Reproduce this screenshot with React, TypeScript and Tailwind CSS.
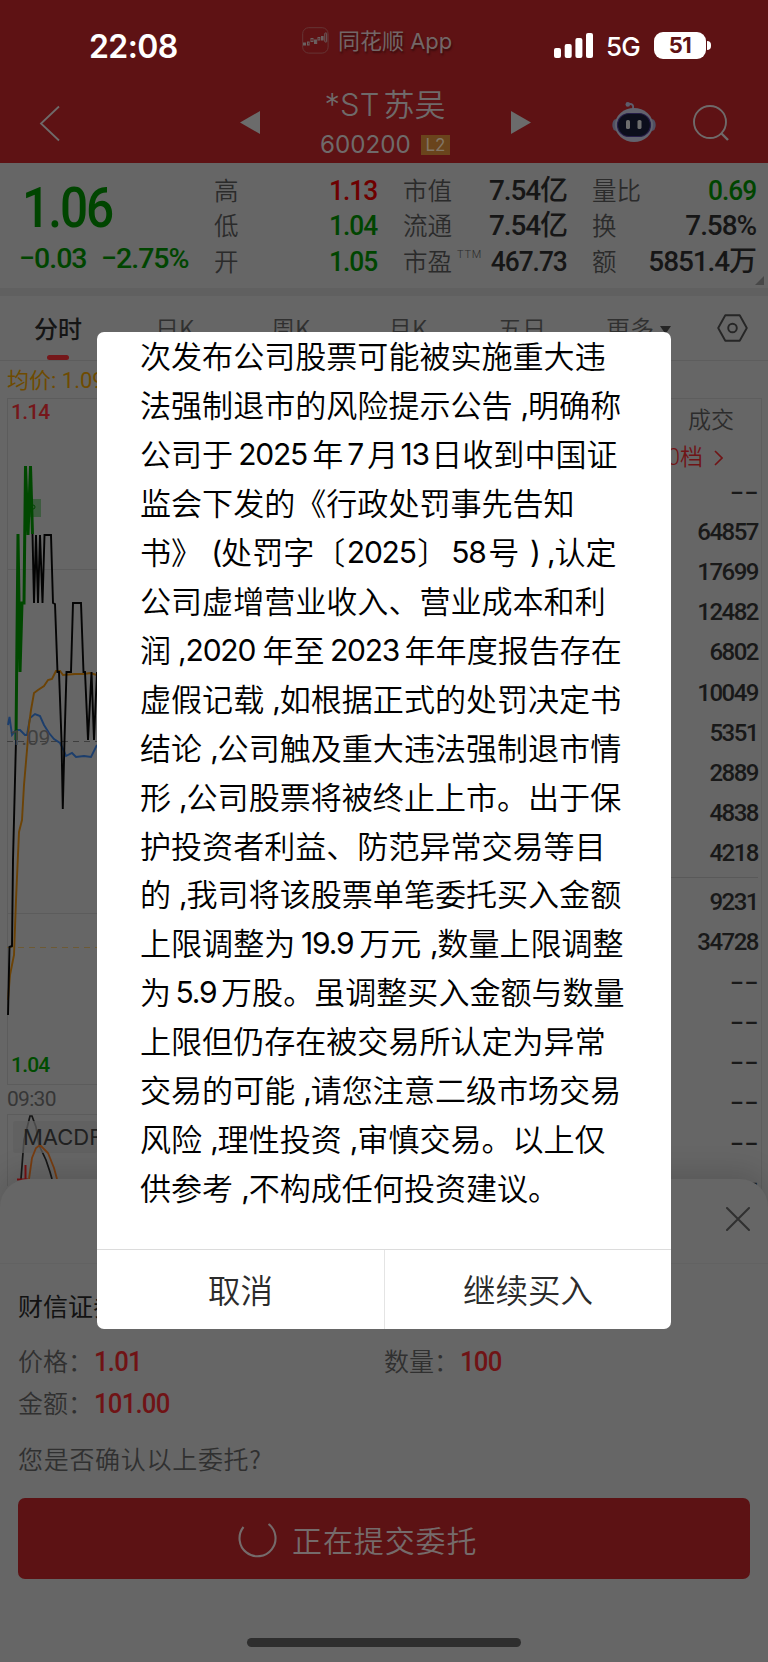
type Run = string | [text: string, width: number];

/* plain strings are full-width glyphs, tuples are latin runs with their own advance */
const NOTICE: Run[][] = [
  ["次发布公司股票可能被实施重大违"],
  ["法强制退市的风险提示公告", [" ,", 15.5], "明确称"],
  ["公司于", ["2025", 79], "年", ["7", 24], "月", ["13", 33], "日收到中国证"],
  ["监会下发的《行政处罚事先告知"],
  ["书》", [" (", 19], "处罚字〔", ["2025", 72], "〕", ["58", 40], "号", [" ) ,", 35], "认定"],
  ["公司虚增营业收入、营业成本和利"],
  ["润", [" ,", 14.5], ["2020 ", 76.9], "年至", ["2023", 80], "年年度报告存在"],
  ["虚假记载", [" ,", 15.5], "如根据正式的处罚决定书"],
  ["结论", [" ,", 15.5], "公司触及重大违法强制退市情"],
  ["形", [" ,", 15.5], "公司股票将被终止上市。出于保"],
  ["护投资者利益、防范异常交易等目"],
  ["的", [" ,", 15.5], "我司将该股票单笔委托买入金额"],
  ["上限调整为", ["19.9", 64], "万元", [" ,", 16], "数量上限调整"],
  ["为", ["5.9", 50], "万股。虽调整买入金额与数量"],
  ["上限但仍存在被交易所认定为异常"],
  ["交易的可能", [" ,", 15.5], "请您注意二级市场交易"],
  ["风险", [" ,", 15.5], "理性投资", [" ,", 15.5], "审慎交易。以上仅"],
  ["供参考", [" ,", 15.5], "不构成任何投资建议。"],
];

const GREEN = "text-[#004500]";
const RED = "text-[#6e0000]";
const INK = "text-[#161616]";

const QUOTES = [
  { width: "w-[163px]", rows: [["高", "1.13", RED], ["低", "1.04", GREEN], ["开", "1.05", GREEN]] },
  { width: "w-[164px]", rows: [["市值", "7.54亿", INK], ["流通", "7.54亿", INK], ["市盈", "467.73", INK]] },
  { width: "w-[164px]", rows: [["量比", "0.69", GREEN], ["换", "7.58%", INK], ["额", "5851.4万", INK]] },
];

const SELLS = ["--", "64857", "17699", "12482", "6802", "10049", "5351", "2889", "4838", "4218"];
const BUYS = ["9231", "34728", "--", "--", "--", "--", "--", "--"];

const DIN = "font-['Roboto','Noto_Sans_CJK_SC',sans-serif] font-medium";

function StatusBar() {
  return (
    <div className="flex h-[86px] items-start font-['Inter',sans-serif] text-white">
      <div className="ml-[89px] mt-[27px] w-[213px] text-[32px] font-semibold leading-10 tracking-[-0.6px]">22:08</div>
      <svg className="mt-[27px] size-[27px]" viewBox="0 0 27 27" fill="none" stroke="#6b6060">
        <rect x="0.7" y="0.7" width="25.4" height="25.4" rx="6" stroke="#653535" />
        <rect x="1.5" y="16" width="2" height="2" fill="#6b6060" />
        <rect x="5.5" y="15" width="1.6" height="3" />
        <rect x="9" y="11.5" width="2" height="3" />
        <rect x="12.5" y="13" width="2.2" height="3.5" fill="#6b6060" />
        <rect x="16" y="10.5" width="1.8" height="2.5" />
        <rect x="19.5" y="9.5" width="1.6" height="3.5" fill="#6b6060" />
        <rect x="22.8" y="6" width="1.9" height="9" rx="0.5" />
      </svg>
      <div className="ml-[9px] mt-[25px] w-[216px] whitespace-nowrap font-['Inter','Noto_Sans_CJK_SC',sans-serif] text-[22px] leading-8 text-[#736767] [text-shadow:1px_2px_2px_rgba(0,0,0,0.4)]">
        同花顺 App
      </div>
      <svg className="mt-[33px] h-[25px] w-[39px]" viewBox="0 0 39 25" fill="#fff">
        <rect y="15" width="7" height="10" rx="2" />
        <rect x="10.7" y="11" width="7" height="14" rx="2" />
        <rect x="21.4" y="5" width="7" height="20" rx="2" />
        <rect x="32" width="7" height="25" rx="2" />
      </svg>
      <div className="ml-[13px] mt-[31px] w-[48px] text-[26px] font-medium leading-8 tracking-[-0.8px]">5G</div>
      <div className="mt-[32px] flex h-[27px] w-[52px] items-center justify-center rounded-[9px] bg-white text-[22px] font-bold tracking-[-0.5px] text-[#5e1214]">
        51
      </div>
      <div className="ml-px mt-[41px] h-[9px] w-1 rounded-r-full bg-white" />
    </div>
  );
}

function Robot() {
  return (
    <svg className="ml-[80px] h-[42px] w-[44px]" viewBox="0 0 44 42">
      <path d="M21 8C22 4 20 2.5 17 3" fill="none" stroke="#5d5d6c" strokeWidth="2" />
      <circle cx="15.8" cy="3.4" r="2.3" fill="#5d5d6c" />
      <ellipse cx="4" cy="24" rx="3.7" ry="6" fill="#505063" />
      <ellipse cx="40" cy="24" rx="3.7" ry="6" fill="#505063" />
      <ellipse cx="22" cy="24" rx="19" ry="17" fill="#62636e" />
      <rect x="5.5" y="12.5" width="33" height="23" rx="11.5" fill="#0c0e1c" stroke="#261d48" strokeWidth="1.2" />
      <rect x="14" y="19" width="4" height="9" rx="1.6" fill="#6e6e6e" />
      <rect x="25.5" y="19" width="4" height="9" rx="1.6" fill="#6e6e6e" />
    </svg>
  );
}

function TitleBar() {
  return (
    <div className="flex h-[77px] items-start text-[#6f6a6a]">
      <svg className="ml-[39px] mt-[19px] h-[37px] w-[21px]" viewBox="0 0 21 37" fill="none" stroke="currentColor" strokeWidth="1.8">
        <path d="M20 1.5 2 18.5 20 35.5" />
      </svg>
      <svg className="ml-[180px] mt-[25px] h-[23px] w-5" viewBox="0 0 20 23" fill="#6b6b6b">
        <path d="M20 0v23L0 11.5z" />
      </svg>
      <div className="ml-[49px] mt-px flex w-[152px] flex-col items-center whitespace-nowrap">
        <p className="font-['Inter','Noto_Sans_CJK_SC',sans-serif] text-[31px] font-[350] leading-[36px]">
          *ST<span className="ml-1">苏吴</span>
        </p>
        <p className="mt-[10px] flex items-center gap-2.5 text-[24.2px] leading-6 font-['Inter',sans-serif]">
          600200
          <span className="flex h-5 w-[29px] items-center justify-center bg-[#6a441c] text-[17px] text-[#827565]">L2</span>
        </p>
      </div>
      <svg className="ml-[50px] mt-[25px] h-[23px] w-5" viewBox="0 0 20 23" fill="#6b6b6b">
        <path d="M0 0v23l20-11.5z" />
      </svg>
      <div className="ml-[1px] mt-[15px]">
        <Robot />
      </div>
      <svg className="ml-[37px] mt-[19px] size-9" viewBox="0 0 36 36" fill="none" stroke="currentColor" strokeWidth="1.9">
        <circle cx="17" cy="17" r="16" />
        <path d="M28 28 35 35" strokeWidth="2.4" />
      </svg>
    </div>
  );
}

function QuotePanel() {
  return (
    <div className={`relative flex h-[126px] border-b border-[#606060] bg-[#666] ${DIN}`}>
      <div className={`w-[214px] ${GREEN}`}>
        <div className="ml-[22px] w-[120px] origin-left scale-x-[0.9] pt-[16px] text-[55px] leading-[58px] tracking-[-2.2px]">1.06</div>
        <div className="flex gap-[15px] pl-[19px] pt-[4px] text-[28.5px] leading-[36px] tracking-[-1px]">
          <span className="w-[67px]">−0.03</span>
          <span>−2.75%</span>
        </div>
      </div>
      {QUOTES.map((col, i) => (
        <div key={i} className={`${col.width} ${i === 0 ? "mr-[26px]" : i === 1 ? "mr-[25px]" : ""} pt-[10px]`}>
          {col.rows.map(([label, value, color]) => (
            <div key={label} className="flex h-[35.5px] items-center justify-between whitespace-nowrap">
              <span className="pt-[3px] text-[24.5px] font-[350] text-[#2b2b2b]">
                {label}
                {label === "市盈" && <sup className="ml-[5px] text-[11px] tracking-[0.8px] -top-[13px]">TTM</sup>}
              </span>
              <span className={`origin-right text-[28px] tracking-[-1.1px] ${/[亿万%]/.test(value) ? "" : "scale-x-[0.94]"} ${color}`}>{value}</span>
            </div>
          ))}
        </div>
      ))}
      <svg className="absolute bottom-[3px] right-[4px] size-[9px]" viewBox="0 0 9 9" fill="#484848">
        <path d="M9 0v9H0z" />
      </svg>
    </div>
  );
}

function Tabs() {
  return (
    <div className="flex h-[65px] items-start border-b border-[#5d5d5d] pt-[14px] font-['Noto_Sans_CJK_SC',sans-serif] text-[24px] font-[350] leading-9 text-[#303030]">
      <div className="ml-[34px] flex w-[121px] flex-col items-start font-medium text-[#151515]">
        分时
        <i className="ml-[13px] mt-[9px] h-[5px] w-[22px] rounded-full bg-[#75171a]" />
      </div>
      <span className="w-[116px]">日K</span>
      <span className="w-[117px]">周K</span>
      <span className="w-[110px]">月K</span>
      <span className="w-[108px]">五日</span>
      <span className="w-[54px]">更多</span>
      <svg className="mt-[16px] h-2 w-[11px]" viewBox="0 0 11 8" fill="#252525">
        <path d="M0 0h11L5.500 8z" />
      </svg>
      <svg className="ml-[46px] mt-[4px] h-[28px] w-[31px]" viewBox="0 0 31 28" fill="none" stroke="#262626" strokeWidth="1.9">
        <path d="M8.300 1.200h14.400L29.800 14l-7.100 12.800H8.300L1.200 14z" strokeLinejoin="round" />
        <circle cx="15.500" cy="14" r="4.300" />
      </svg>
    </div>
  );
}

function MinuteChart() {
  return (
    <svg className="h-[825px] w-[97px] shrink-0" viewBox="0 361 97 825" fill="none" fontFamily="Roboto, 'Noto Sans CJK SC', sans-serif">
      <path d="M7 398.500H97M7 569.500H97M7 913.500H97M7 1084.500H97M7 1114.500H97M7.500 398V1084M7.500 1114V1186" stroke="#5c5c5c" />
      <path d="M7 741.500H97" stroke="#3e3e3e" strokeDasharray="6 5" />
      <path d="M7 947.500H97" stroke="#6d5a34" strokeDasharray="6 5" />
      <text x="7" y="388" fontSize="22" fill="#6f4b00">均价: 1.093</text>
      <text x="11" y="418.500" fontSize="21" fontWeight="500" letterSpacing="-0.8" fill="#75171a">1.14</text>
      <rect x="24" y="499" width="17" height="18" fill="#3d5c3f" />
      <path d="M8 725 9.500 717 12 735 16 730 20 730 25 735 27 735 30 718 35 714 40 716 44 725 49 733 54 739 60 743 64 751 66 756 72 753 76 757 84 756 91 757 97 745" stroke="#1c3e6c" strokeWidth="1.900" />
      <path d="M8 1000 10 975 14 955 16 900 19 832 22 820 24 785 27 750 29 725 31 710 34 693 38 690 44 686 48 680 52 679 56 671 60 671 63 675 75 674 84 674 90 673 97 675" stroke="#6c4306" strokeWidth="1.900" />
      <path d="M8 1015 9.500 947 12 946 13 860 16 740M32.500 534 34 603 36 535 38 603 40 535 42.500 603 44.500 535H51L53 603 55 604 57.500 672H59L61.500 740 62.800 809 64.500 740 66.500 672H71L73 603H81L83.500 672H85L88 740 91.500 672 94 740 97 672" stroke="#040404" strokeWidth="1.900" />
      <path d="M16 740 18 534 20 672 22 603H24L25.500 466 28 535 30.500 466 32.500 534" stroke="#004800" strokeWidth="3" />
      <circle cx="33" cy="507" r="2" stroke="#004800" />
      <text x="10" y="744.500" fontSize="21" letterSpacing="-0.2" fill="#404040">1.09</text>
      <text x="11" y="1071.500" fontSize="21" fontWeight="500" letterSpacing="-0.8" fill="#004c00">1.04</text>
      <text x="7" y="1105.500" fontSize="21" letterSpacing="-0.7" fill="#363636">09:30</text>
      <path d="M21 1179 24 1140 28 1124 30 1116H32L36 1127 39 1145 46 1160 50 1172 52 1179" stroke="#161616" strokeWidth="1.700" />
      <rect x="13" y="1121" width="84" height="32" rx="3" fill="#5f5f5f" fillOpacity="0.7" />
      <path d="M29 1179 32 1158 36 1148 40 1145 48 1153 54 1168 57 1179" stroke="#773c10" strokeWidth="1.800" />
      <path d="M25.500 1165V1179M17 1179.500H28" stroke="#790e10" strokeWidth="2" />
      <text x="23" y="1145" fontSize="22" fontFamily="Inter, sans-serif" fill="#202020">MACDFS</text>
    </svg>
  );
}

function OrderBook() {
  return (
    <div className={`mr-[6px] mt-[37px] w-[92px] border-r border-t border-[#5d5d5d] pr-[3px] text-right text-[24px] tracking-[-1.5px] text-[#191919] ${DIN}`}>
      <div className="flex h-[45px] items-center justify-end pr-[24px] text-[23px] font-[350] tracking-normal text-[#2c2c2c]">成交</div>
      <div className="flex h-[28px] items-center justify-end whitespace-nowrap pr-[35px] text-[23px] font-[350] tracking-normal text-[#701416]">
        10档
        <svg className="ml-[11px] h-4 w-[9px] shrink-0" viewBox="0 0 9 16" fill="none" stroke="currentColor" strokeWidth="1.600">
          <path d="M1 1l7 7-7 7" />
        </svg>
      </div>
      <div>
        {SELLS.map((v, i) => (
          <Volume key={i} value={v} />
        ))}
      </div>
      <div className="mb-[4px] mt-[4px] border-t border-[#595959]" />
      {BUYS.map((v, i) => (
        <Volume key={i} value={v} />
      ))}
    </div>
  );
}

function Volume({ value }: { value: string }) {
  return (
    <div className="flex h-[40.1px] items-center justify-end">
      {value === "--" ? (
        <span className="origin-right scale-x-[1.35] font-['Inter',sans-serif] tracking-[-0.5px]">--</span>
      ) : (
        <span>{value}</span>
      )}
    </div>
  );
}

function OrderSheet() {
  return (
    <section className="absolute inset-x-0 bottom-0 flex h-[483px] flex-col rounded-t-[28px] bg-[#666] font-['Noto_Sans_CJK_SC',sans-serif] text-[25px] font-[350] leading-9 text-[#303030] shadow-[0_-8px_28px_rgba(0,0,0,0.14)]">
      <header className="flex h-[85px] items-start justify-end border-b border-[#626262] pr-[18px] pt-[28px]">
        <svg className="size-6" viewBox="0 0 24 24" fill="none" stroke="#303030" strokeWidth="2" strokeLinecap="round">
          <path d="M1 1l22 22M23 1 1 23" />
        </svg>
      </header>
      <p className="mt-[23px] pl-[18px] font-normal text-[#121212]">财信证券</p>
      <dl className="mt-[19px] grid grid-cols-[366px_1fr] gap-y-[6px] pl-[18px]">
        <Field label="价格" value="1.01" />
        <Field label="数量" value="100" />
        <Field label="金额" value="101.00" />
      </dl>
      <p className="mt-[20px] pl-[18px] tracking-[0.7px]">您是否确认以上委托?</p>
      <button className="mx-[18px] mt-[22px] flex h-[81px] items-center rounded-[7px] bg-[#5c1214] text-[#756b6b]">
        <svg className="ml-[219px] size-[40px]" viewBox="0 0 40 40" fill="none" stroke="currentColor" strokeWidth="2.100">
          <path d="M6.500 8A18 18 0 1 0 31.500 5" />
        </svg>
        <span className="ml-[15px] text-[30px] tracking-[0.9px]">正在提交委托</span>
      </button>
    </section>
  );
}

function Field({ label, value }: { label: string; value: string }) {
  return (
    <div className="flex h-9 items-center">
      <dt className="w-[76px]">{label}：</dt>
      <dd className={`mt-[3px] origin-left scale-x-[0.95] text-[27px] tracking-[-0.8px] text-[#701315] ${DIN}`}>{value}</dd>
    </div>
  );
}

function Dialog() {
  return (
    <div className="absolute left-[97px] top-[332px] flex h-[997px] w-[574px] flex-col overflow-hidden rounded-[7px] bg-white font-['Noto_Sans_CJK_SC',sans-serif]">
      <div className="-mt-px flex-1 pl-[43px] text-[31.060px] font-[350] text-black [text-spacing-trim:space-all]">
        {NOTICE.map((line, i) => (
          <p key={i} className="flex h-[48.960px] items-center whitespace-pre leading-[48.960px]">
            {line.map((run, j) =>
              typeof run === "string" ? (
                <span key={j}>{run}</span>
              ) : (
                <span
                  key={j}
                  className={`flex pt-[2px] font-['Inter',sans-serif] text-[30px] font-normal tracking-[-1.2px] ${run[0].startsWith(" ") ? "justify-end" : "justify-center"}`}
                  style={{ width: run[1] }}
                >
                  {run[0]}
                </span>
              ),
            )}
          </p>
        ))}
      </div>
      <div className="grid h-[80px] grid-cols-2 border-t border-[#dcdcdc] text-[32.500px] font-[350] text-[#2b2b2b]">
        <button>取消</button>
        <button className="border-l border-[#e4e4e4]">继续买入</button>
      </div>
    </div>
  );
}

export default function App() {
  return (
    <div className="relative h-[1662px] w-[768px] overflow-hidden bg-[#666]">
      <div className="bg-[#5e1214]">
        <StatusBar />
        <TitleBar />
      </div>
      <QuotePanel />
      <div className="h-[7px] bg-[#606060]" />
      <Tabs />
      <div className="flex items-start justify-between">
        <MinuteChart />
        <OrderBook />
      </div>
      <OrderSheet />
      <Dialog />
      {/* home indicator */}
      <div className="absolute bottom-[15px] left-[247px] h-[9px] w-[274px] rounded-full bg-[#2e2e2e]" />
    </div>
  );
}
